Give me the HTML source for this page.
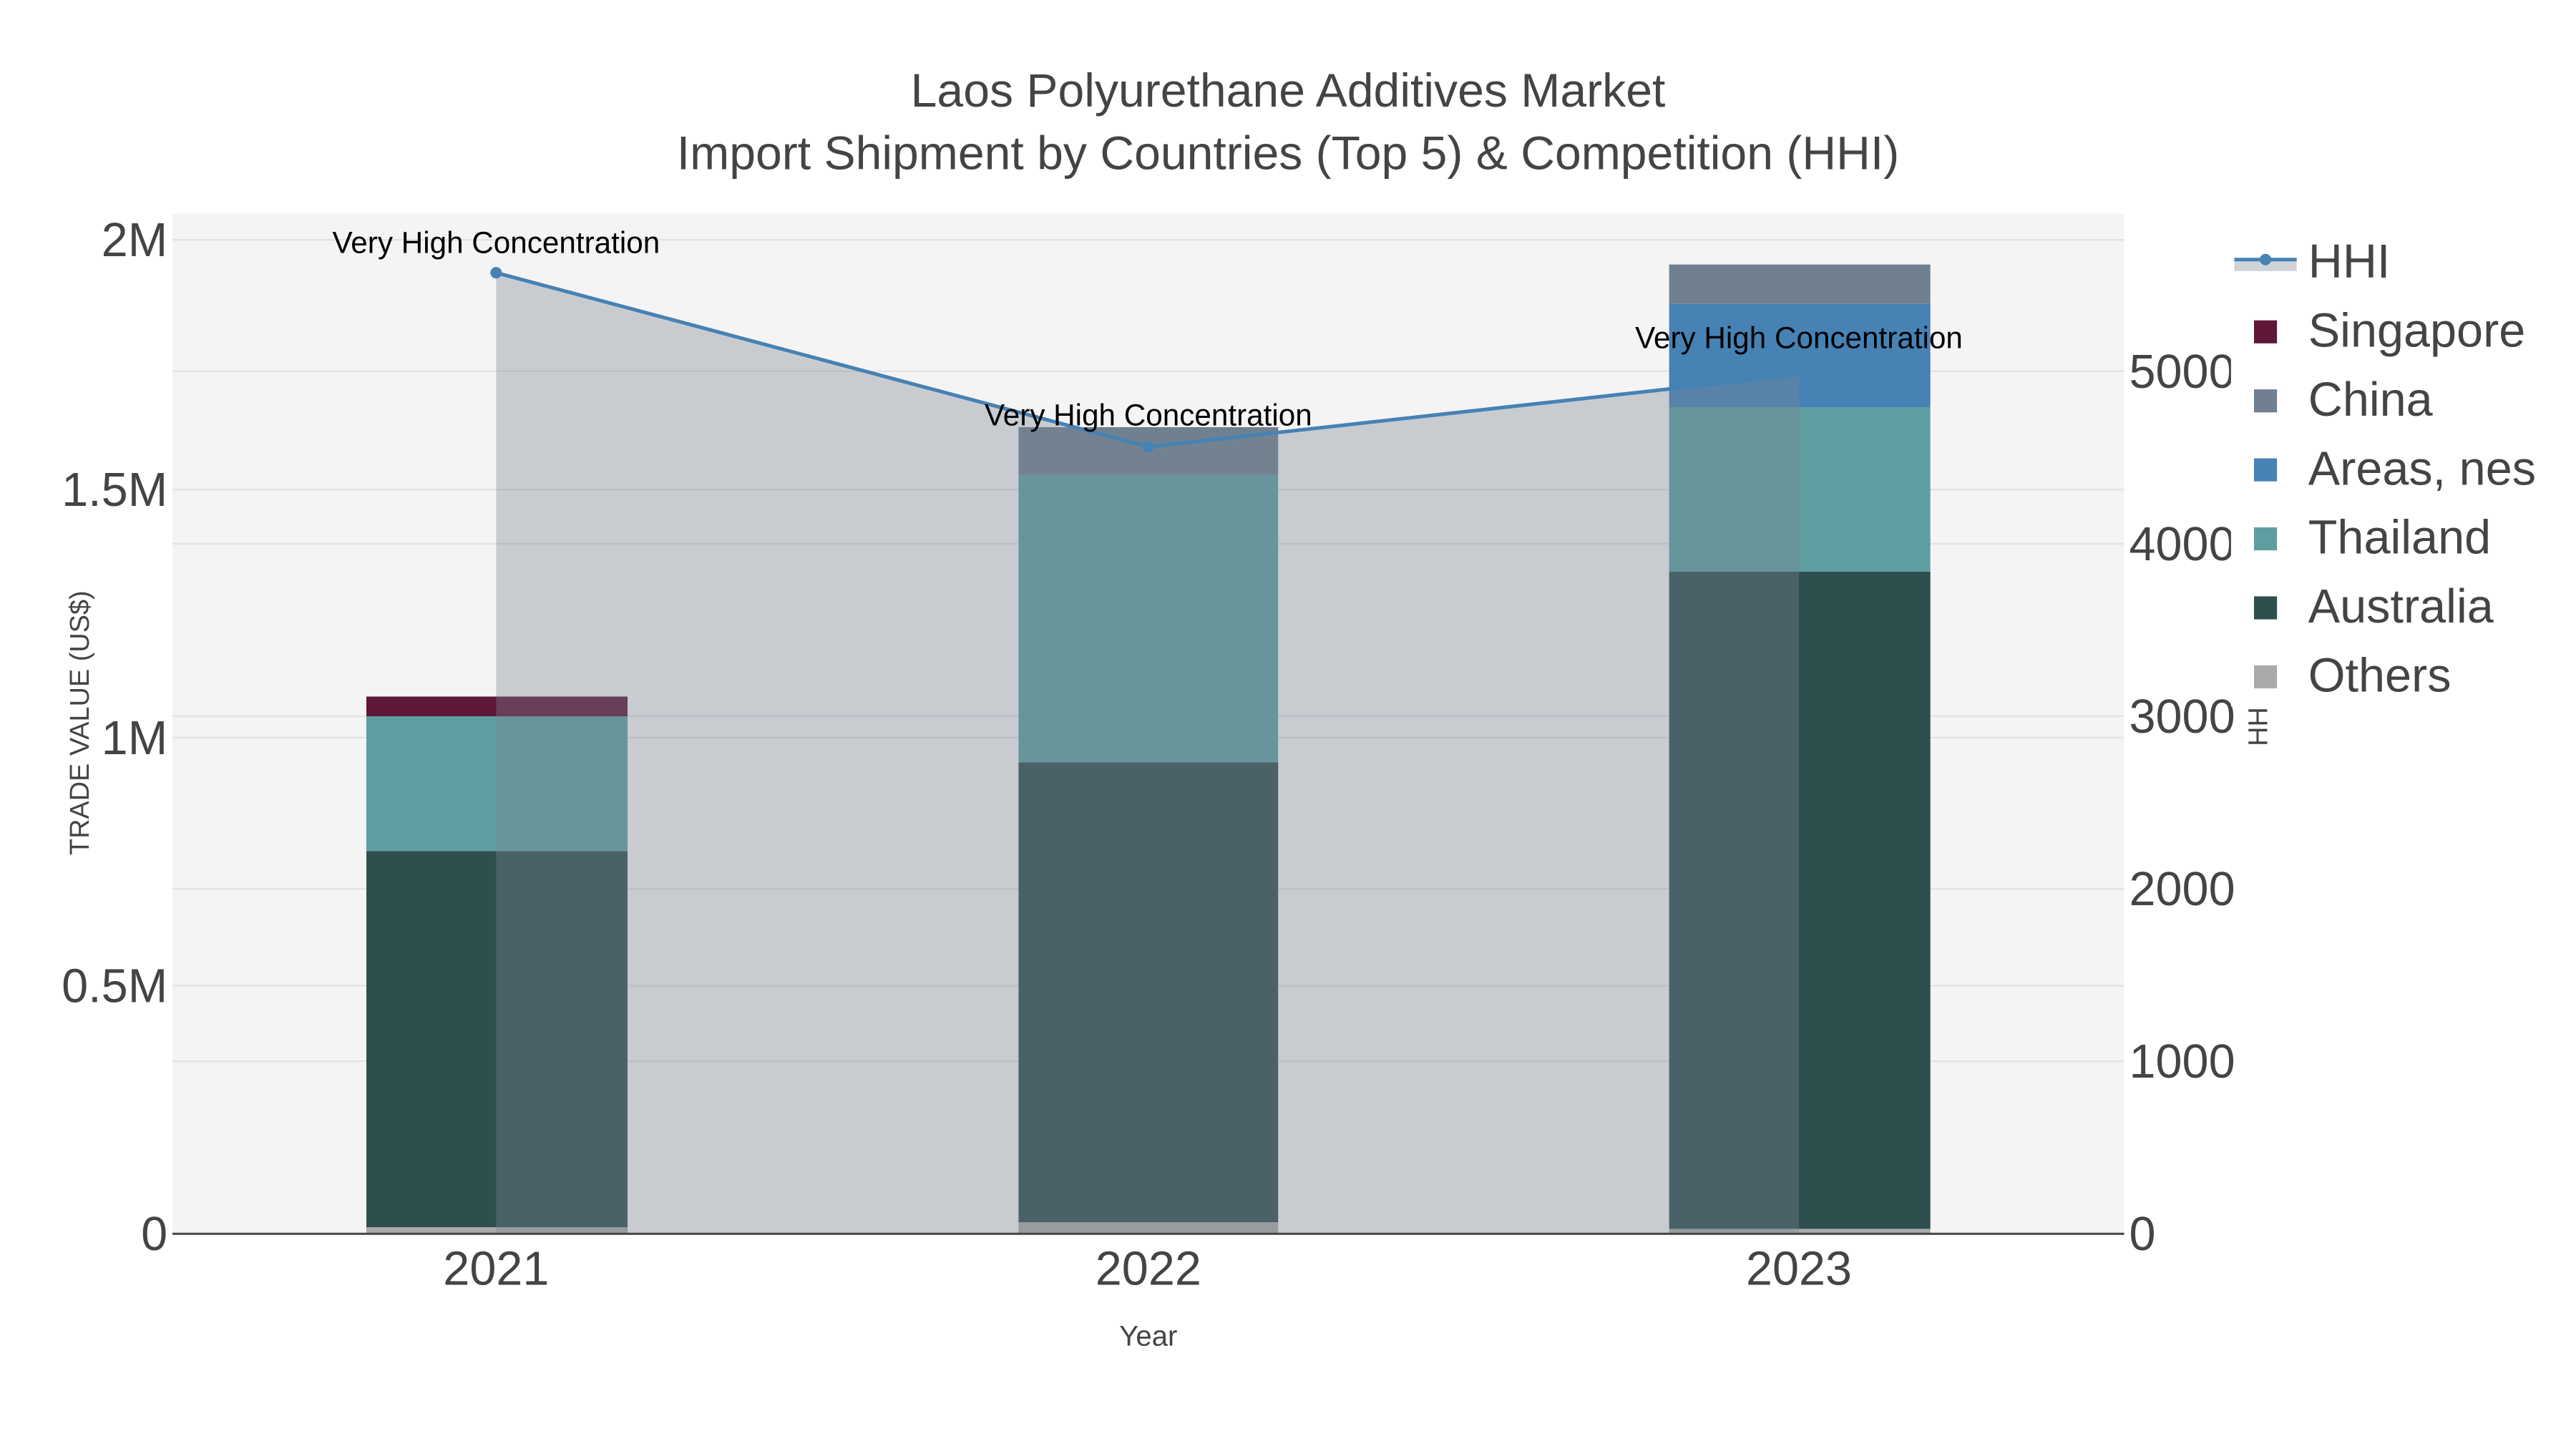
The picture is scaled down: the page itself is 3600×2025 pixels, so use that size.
<!DOCTYPE html>
<html><head><meta charset="utf-8"><style>
html,body{margin:0;padding:0;background:#fff;}
svg{display:block;}
text{font-family:"Liberation Sans",Arial,sans-serif;}
</style></head><body>
<svg width="3600" height="2025" viewBox="0 0 1568 882" preserveAspectRatio="none" xmlns="http://www.w3.org/2000/svg">
<rect width="1570" height="885" fill="#fff"/>
<rect x="105" y="130" width="1188" height="621" fill="#f4f4f4"/>
<g stroke="#e2e2e2" stroke-width="1">
<line x1="105" x2="1293" y1="146" y2="146"/>
<line x1="105" x2="1293" y1="298" y2="298"/>
<line x1="105" x2="1293" y1="449" y2="449"/>
<line x1="105" x2="1293" y1="600" y2="600"/>
<line x1="105" x2="1293" y1="226" y2="226"/>
<line x1="105" x2="1293" y1="331" y2="331"/>
<line x1="105" x2="1293" y1="436" y2="436"/>
<line x1="105" x2="1293" y1="541" y2="541"/>
<line x1="105" x2="1293" y1="646" y2="646"/>
</g>
<rect x="223" y="747" width="159" height="4" fill="#aaaaaa"/>
<rect x="223" y="518" width="159" height="229" fill="#2f4f4f"/>
<rect x="223" y="436" width="159" height="82" fill="#5f9ea0"/>
<rect x="223" y="424" width="159" height="12" fill="#5e1738"/>
<rect x="620" y="744" width="158" height="7" fill="#aaaaaa"/>
<rect x="620" y="464" width="158" height="280" fill="#2f4f4f"/>
<rect x="620" y="289" width="158" height="175" fill="#5f9ea0"/>
<rect x="620" y="260" width="158" height="29" fill="#708090"/>
<rect x="1016" y="748" width="159" height="3" fill="#aaaaaa"/>
<rect x="1016" y="348" width="159" height="400" fill="#2f4f4f"/>
<rect x="1016" y="248" width="159" height="100" fill="#5f9ea0"/>
<rect x="1016" y="185" width="159" height="63" fill="#4682b4"/>
<rect x="1016" y="161" width="159" height="24" fill="#708090"/>
<polygon points="302,166 699,272 1095,228 1095,751 302,751" fill="rgba(122,134,146,0.36)"/>
<polyline points="302,166 699,272 1095,228" fill="none" stroke="#4682b4" stroke-width="2.2"/>
<circle cx="302" cy="166" r="3.5" fill="#4682b4"/>
<circle cx="699" cy="272" r="3.5" fill="#4682b4"/>
<line x1="105" x2="1293" y1="751" y2="751" stroke="#444" stroke-width="1.3"/>
<g font-size="18.4" fill="#000" text-anchor="middle">
<text x="302" y="154">Very High Concentration</text>
<text x="699" y="259">Very High Concentration</text>
<text x="1095" y="212">Very High Concentration</text>
</g>
<g font-size="28.8" fill="#444" text-anchor="middle">
<text x="784" y="65">Laos Polyurethane Additives Market</text>
<text x="784" y="103">Import Shipment by Countries (Top 5) &amp; Competition (HHI)</text>
</g>
<g font-size="29" fill="#444" text-anchor="end">
<text x="102" y="156">2M</text>
<text x="102" y="308">1.5M</text>
<text x="102" y="459">1M</text>
<text x="102" y="610">0.5M</text>
<text x="102" y="761">0</text>
</g>
<g font-size="29" fill="#444">
<text x="1296" y="236">5000</text>
<text x="1296" y="341">4000</text>
<text x="1296" y="446">3000</text>
<text x="1296" y="551">2000</text>
<text x="1296" y="656">1000</text>
<text x="1296" y="761">0</text>
</g>
<g font-size="29" fill="#444" text-anchor="middle">
<text x="302" y="782">2021</text>
<text x="699" y="782">2022</text>
<text x="1095" y="782">2023</text>
</g>
<text x="699" y="819" font-size="17.5" fill="#444" text-anchor="middle">Year</text>
<text transform="translate(54,440) rotate(-90)" font-size="16.5" fill="#444" text-anchor="middle">TRADE VALUE (US$)</text>
<text transform="translate(1380,440) rotate(-90)" font-size="16.5" fill="#444" text-anchor="middle">HHI</text>
<rect x="1358" y="140" width="210" height="290" fill="#fff"/>
<rect x="1360" y="158" width="38" height="7" fill="rgba(122,134,146,0.36)"/>
<line x1="1360" x2="1398" y1="158" y2="158" stroke="#4682b4" stroke-width="2.2"/>
<circle cx="1379" cy="158" r="3.5" fill="#4682b4"/>
<rect x="1372" y="195" width="14" height="14" fill="#5e1738"/>
<rect x="1372" y="237" width="14" height="14" fill="#708090"/>
<rect x="1372" y="279" width="14" height="14" fill="#4682b4"/>
<rect x="1372" y="321" width="14" height="14" fill="#5f9ea0"/>
<rect x="1372" y="363" width="14" height="14" fill="#2f4f4f"/>
<rect x="1372" y="405" width="14" height="14" fill="#aaaaaa"/>
<g font-size="29" fill="#444">
<text x="1405" y="169">HHI</text>
<text x="1405" y="211">Singapore</text>
<text x="1405" y="253">China</text>
<text x="1405" y="295">Areas, nes</text>
<text x="1405" y="337">Thailand</text>
<text x="1405" y="379">Australia</text>
<text x="1405" y="421">Others</text>
</g>
</svg>
</body></html>
